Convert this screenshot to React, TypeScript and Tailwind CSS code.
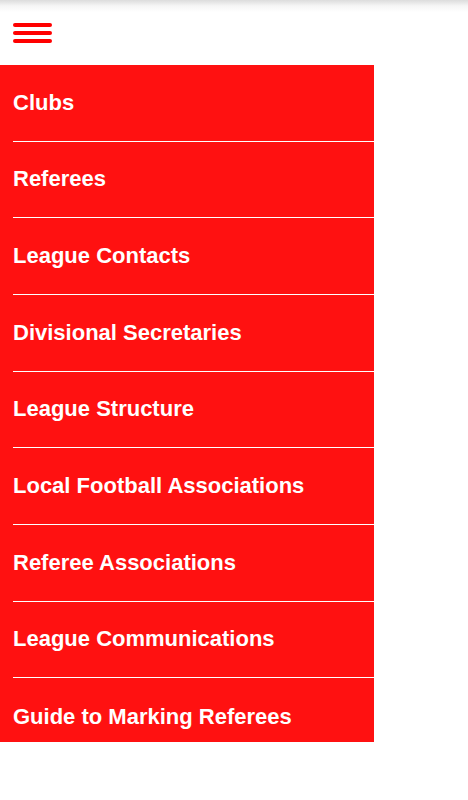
import React from 'react';

const items = [
  'Clubs',
  'Referees',
  'League Contacts',
  'Divisional Secretaries',
  'League Structure',
  'Local Football Associations',
  'Referee Associations',
  'League Communications',
  'Guide to Marking Referees',
];

export default function App() {
  return (
    <div className="w-[468px] h-[800px] bg-white overflow-hidden font-['Liberation_Sans',Arial,sans-serif]">
      <header className="h-[65px] flex items-center pl-[13px] bg-[linear-gradient(to_bottom,#dcdcdc_0px,#f6f6f6_6px,#ffffff_12px)]">
        <button className="flex flex-col gap-[4px] w-[39px]">
          <span className="block h-[4px] rounded-full bg-[#ff0000]" />
          <span className="block h-[4px] rounded-full bg-[#ff0000]" />
          <span className="block h-[4px] rounded-full bg-[#ff0000]" />
        </button>
      </header>

      <nav className="w-[374px] h-[677px] bg-[#ff1111] overflow-hidden">
        {items.map((label, i) => (
          <div key={label} className="h-[76.67px] flex flex-col">
            <div className="flex-1 flex items-center pl-[13px] text-white font-bold text-[22px] leading-none">
              {label}
            </div>
            {i < items.length - 1 && <div className="ml-[13px] h-px bg-white" />}
          </div>
        ))}
      </nav>
    </div>
  );
}
